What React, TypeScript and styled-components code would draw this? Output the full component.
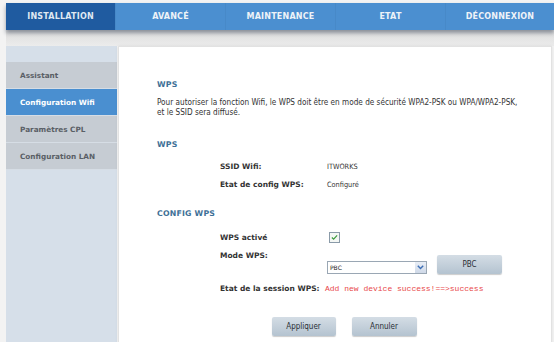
import React from 'react';
import styled, { createGlobalStyle } from 'styled-components';

const GlobalStyle = createGlobalStyle`
    html, body {
        margin: 0;
        padding: 0;
        background: #f3f3f3;
    }
`;

const tabs = ['INSTALLATION', 'AVANCÉ', 'MAINTENANCE', 'ETAT', 'DÉCONNEXION'];
const menu = ['Assistant', 'Configuration Wifi', 'Paramètres CPL', 'Configuration LAN'];

export default function App() {
    return (
        <>
            <GlobalStyle />
            <Page>
                <NavBar>
                    {tabs.map((t, i) => (
                        <Tab key={t} $active={i === 0}>
                            {t}
                        </Tab>
                    ))}
                </NavBar>
                <Band />
                <Body>
                    <Sidebar>
                        <SideMenu>
                            {menu.map((m, i) => (
                                <SideItem key={m} $active={i === 1}>
                                    {m}
                                </SideItem>
                            ))}
                        </SideMenu>
                    </Sidebar>

                    <Main>
                        <Heading>WPS</Heading>
                        <Paragraph>
                            Pour autoriser la fonction Wifi, le WPS doit être en mode de
                            sécurité WPA2-PSK ou WPA/WPA2-PSK,
                            <br />
                            et le SSID sera diffusé.
                        </Paragraph>

                        <Heading>WPS</Heading>
                        <Form $top={1}>
                            <Label>SSID Wifi:</Label>
                            <Value>ITWORKS</Value>
                            <Label>Etat de config WPS:</Label>
                            <Value>Configuré</Value>
                        </Form>

                        <Heading>CONFIG WPS</Heading>
                        <Form $top={9}>
                            <Label>WPS activé</Label>
                            <Value>
                                <CheckBox>
                                    <svg width="7" height="7" viewBox="0 0 8 8">
                                        <path
                                            d="M1 4 L3 6 L7 1.5"
                                            fill="none"
                                            stroke="#3c9a3c"
                                            strokeWidth="1.3"
                                        />
                                    </svg>
                                </CheckBox>
                            </Value>
                            <ModeLabel>Mode WPS:</ModeLabel>
                            <ModeCell>
                                <Select>
                                    <span>PBC</span>
                                    <SelectArrow>
                                        <svg width="7" height="5" viewBox="0 0 7 5">
                                            <path
                                                d="M0.8 0.8 L3.5 3.6 L6.2 0.8"
                                                fill="none"
                                                stroke="#3d6eb5"
                                                strokeWidth="1.4"
                                            />
                                        </svg>
                                    </SelectArrow>
                                </Select>
                                <GrayButton $width={65} $height={19}>
                                    PBC
                                </GrayButton>
                            </ModeCell>
                            <Label>Etat de la session WPS:</Label>
                            <Status>Add new device success!==&gt;success</Status>
                        </Form>

                        <Actions>
                            <GrayButton $width={64} $height={19}>
                                Appliquer
                            </GrayButton>
                            <GrayButton $width={65} $height={19}>
                                Annuler
                            </GrayButton>
                        </Actions>
                    </Main>
                </Body>
            </Page>
        </>
    );
}

const Page = styled.div`
    width: 554px;
    height: 342px;
    overflow: hidden;
    padding-top: 3px;
    box-sizing: border-box;
    font-family: 'DejaVu Sans', Verdana, sans-serif;
`;

const NavBar = styled.div`
    display: flex;
    margin-left: 6px;
    height: 27px;
    background: #4b8fd0;
    box-shadow: 0 3px 4px rgba(40, 50, 70, 0.45);
    position: relative;
    z-index: 1;
`;

const Tab = styled.div<{ $active?: boolean }>`
    flex: 0 0 109px;
    display: flex;
    align-items: center;
    justify-content: center;
    font-size: 8px;
    font-weight: bold;
    letter-spacing: 0.2px;
    color: ${(p) => (p.$active ? '#dfe8f2' : '#eef3f8')};
    background: ${(p) => (p.$active ? '#1f5ba0' : '#4b8fd0')};
    border-right: 1px solid #4789c8;
    &:last-child {
        flex: 1;
        border-right: none;
    }
`;

const Band = styled.div`
    margin-left: 6px;
    height: 16px;
    background: linear-gradient(#dcdcdc, #ececec);
`;

const Body = styled.div`
    display: flex;
    margin-left: 6px;
    height: 300px;
`;

const Sidebar = styled.div`
    width: 111px;
    flex: none;
    background: #d6dfe9;
    padding-top: 16px;
    box-sizing: border-box;
`;

const SideMenu = styled.ul`
    list-style: none;
    margin: 0;
    padding: 0;
`;

const SideItem = styled.li<{ $active?: boolean }>`
    height: 26px;
    display: flex;
    align-items: center;
    padding-left: 14px;
    font-size: 7.3px;
    font-weight: bold;
    color: ${(p) => (p.$active ? '#ffffff' : '#5a5f66')};
    background: ${(p) => (p.$active ? '#4a8fd0' : '#c6ccd3')};
    border-bottom: 1px solid #d6dde5;
`;

const Main = styled.div`
    flex: 1;
    margin-left: 1px;
    margin-right: 2px;
    background: #ffffff;
    border: 1px solid #e2e2e2;
    padding: 33px 0 0 38px;
    box-sizing: border-box;
    box-shadow: 0 0 3px rgba(0, 0, 0, 0.08);
`;

const Heading = styled.div`
    font-size: 7.8px;
    line-height: 10px;
    font-weight: bold;
    color: #3d6f96;
    letter-spacing: 0.2px;
    margin-bottom: 7px;
`;

const Paragraph = styled.p`
    margin: 0 0 23px;
    font-family: 'DejaVu Sans Condensed', 'DejaVu Sans', sans-serif;
    font-size: 8.15px;
    line-height: 10px;
    color: #333;
`;

const Form = styled.div<{ $top: number }>`
    display: grid;
    grid-template-columns: 107px auto;
    grid-auto-rows: minmax(18px, auto);
    align-items: center;
    margin: ${(p) => p.$top}px 0 16px 63px;
`;

const Label = styled.div`
    font-size: 7.5px;
    font-weight: bold;
    color: #333;
    white-space: nowrap;
`;

const ModeLabel = styled(Label)`
    align-self: start;
    padding-top: 5px;
    height: 28px;
`;

const Value = styled.div`
    font-family: 'DejaVu Sans Condensed', 'DejaVu Sans', sans-serif;
    font-size: 7.3px;
    color: #333;
    display: flex;
    align-items: center;
`;

const CheckBox = styled.div`
    width: 9px;
    height: 9px;
    border: 1px solid #8a9aa8;
    background: #f4f7f4;
    display: flex;
    align-items: center;
    justify-content: center;
    margin-left: 2px;
`;

const ModeCell = styled.div`
    display: flex;
    align-items: flex-end;
    gap: 10px;
    align-self: start;
    height: 28px;
`;

const Select = styled.div`
    width: 96px;
    height: 11px;
    border: 1px solid #9aa7b4;
    display: flex;
    align-items: center;
    justify-content: space-between;
    padding-left: 2px;
    font-size: 6px;
    color: #222;
    background: #fff;
`;

const SelectArrow = styled.div`
    width: 11px;
    height: 11px;
    background: linear-gradient(#e9eef6, #cfd9e8);
    display: flex;
    align-items: center;
    justify-content: center;
`;

const GrayButton = styled.div<{ $width: number; $height: number }>`
    width: ${(p) => p.$width}px;
    height: ${(p) => p.$height}px;
    border-radius: 2px;
    background: linear-gradient(#d4dde5, #b4c3d0);
    box-shadow: 0 1px 1px rgba(0, 0, 0, 0.2);
    display: flex;
    align-items: center;
    justify-content: center;
    font-family: 'DejaVu Sans Condensed', 'DejaVu Sans', sans-serif;
    font-size: 8px;
    color: #2a2f35;
`;

const Status = styled.div`
    font-family: 'Liberation Mono', monospace;
    font-size: 8px;
    color: #e8474a;
    margin-left: -2px;
`;

const Actions = styled.div`
    display: flex;
    justify-content: center;
    gap: 16px;
    margin-top: 20px;
    padding-right: 20px;
`;
